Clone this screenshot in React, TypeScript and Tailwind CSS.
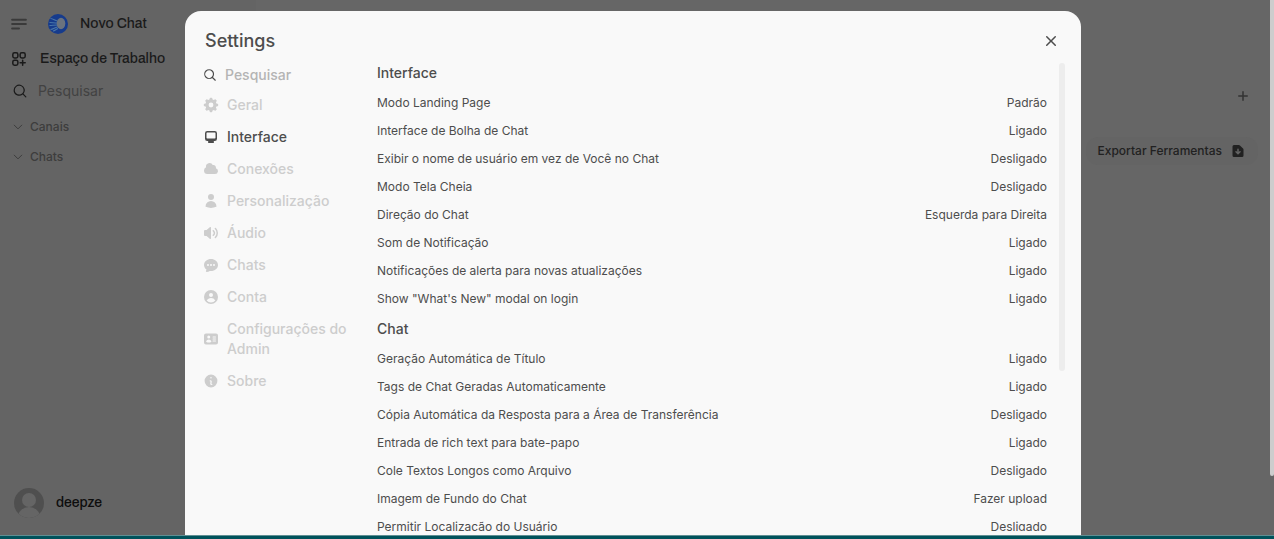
import React, { useState } from 'react';
import {
  HiIdentification,
  HiMiniCog8Tooth,
  HiMiniInformationCircle,
  HiUser,
} from 'react-icons/hi2';

type Setting = { label: string; value: string };
type Section = { title: string; settings: Setting[] };

const sections: Section[] = [
  {
    title: 'Interface',
    settings: [
      { label: 'Modo Landing Page', value: 'Padrão' },
      { label: 'Interface de Bolha de Chat', value: 'Ligado' },
      { label: 'Exibir o nome de usuário em vez de Você no Chat', value: 'Desligado' },
      { label: 'Modo Tela Cheia', value: 'Desligado' },
      { label: 'Direção do Chat', value: 'Esquerda para Direita' },
      { label: 'Som de Notificação', value: 'Ligado' },
      { label: 'Notificações de alerta para novas atualizações', value: 'Ligado' },
      { label: 'Show "What\'s New" modal on login', value: 'Ligado' },
    ],
  },
  {
    title: 'Chat',
    settings: [
      { label: 'Geração Automática de Título', value: 'Ligado' },
      { label: 'Tags de Chat Geradas Automaticamente', value: 'Ligado' },
      { label: 'Cópia Automática da Resposta para a Área de Transferência', value: 'Desligado' },
      { label: 'Entrada de rich text para bate-papo', value: 'Ligado' },
      { label: 'Cole Textos Longos como Arquivo', value: 'Desligado' },
      { label: 'Imagem de Fundo do Chat', value: 'Fazer upload' },
      { label: 'Permitir Localização do Usuário', value: 'Desligado' },
    ],
  },
];

const tabs = [
  { id: 'general', label: 'Geral', icon: <HiMiniCog8Tooth className="size-4" /> },
  { id: 'interface', label: 'Interface', icon: <SolidIcon d="M2 4.25A2.25 2.25 0 0 1 4.25 2h7.5A2.25 2.25 0 0 1 14 4.25v5.5A2.25 2.25 0 0 1 11.75 12h-1.312c.1.128.21.248.328.36a.75.75 0 0 1 .234.545v.345a.75.75 0 0 1-.75.75h-4.5a.75.75 0 0 1-.75-.75v-.345a.75.75 0 0 1 .234-.545c.118-.111.228-.232.328-.36H4.25A2.25 2.25 0 0 1 2 9.75v-5.5Zm2.25-.75a.75.75 0 0 0-.75.75v4.5c0 .414.336.75.75.75h7.5a.75.75 0 0 0 .75-.75v-4.5a.75.75 0 0 0-.75-.75h-7.5Z" /> },
  { id: 'connections', label: 'Conexões', icon: <SolidIcon d="M1 9.5A3.5 3.5 0 0 0 4.5 13H12a3 3 0 0 0 .917-5.857 2.503 2.503 0 0 0-3.198-3.019 3.5 3.5 0 0 0-6.628 2.171A3.5 3.5 0 0 0 1 9.5Z" /> },
  { id: 'personalization', label: 'Personalização', icon: <HiUser className="size-4" /> },
  { id: 'audio', label: 'Áudio', icon: <SolidIcon d="M7.557 2.066A.75.75 0 0 1 8 2.75v10.5a.75.75 0 0 1-1.248.56L3.59 11H2a1 1 0 0 1-1-1V6a1 1 0 0 1 1-1h1.59l3.162-2.81a.75.75 0 0 1 .805-.124ZM12.95 3.05a.75.75 0 1 0-1.06 1.06 5.5 5.5 0 0 1 0 7.78.75.75 0 1 0 1.06 1.06 7 7 0 0 0 0-9.9ZM10.828 5.172a.75.75 0 1 0-1.06 1.06 2.5 2.5 0 0 1 0 3.536.75.75 0 1 0 1.06 1.06 4 4 0 0 0 0-5.656Z" /> },
  { id: 'chats', label: 'Chats', icon: <SolidIcon d="M8 2C4.262 2 1 4.57 1 8c0 1.86.98 3.486 2.455 4.566a3.472 3.472 0 0 1-.469 1.26.75.75 0 0 0 .713 1.14 6.961 6.961 0 0 0 3.06-1.06c.403.062.818.094 1.241.094 3.738 0 7-2.57 7-6s-3.262-6-7-6ZM5 9a1 1 0 1 0 0-2 1 1 0 0 0 0 2Zm7-1a1 1 0 1 1-2 0 1 1 0 0 1 2 0ZM8 9a1 1 0 1 0 0-2 1 1 0 0 0 0 2Z" /> },
  { id: 'account', label: 'Conta', icon: <SolidIcon d="M15 8A7 7 0 1 1 1 8a7 7 0 0 1 14 0Zm-5-2a2 2 0 1 1-4 0 2 2 0 0 1 4 0ZM8 9c-1.825 0-3.422.977-4.295 2.437A5.49 5.49 0 0 0 8 13.5a5.49 5.49 0 0 0 4.294-2.063A4.997 4.997 0 0 0 8 9Z" /> },
  { id: 'admin', label: 'Configurações do Admin', icon: <HiIdentification className="size-4" /> },
  { id: 'about', label: 'Sobre', icon: <HiMiniInformationCircle className="size-4" /> },
];

export default function App() {
  return (
    <div className="relative flex h-screen flex-col overflow-hidden bg-[#666666] font-['Inter','Liberation_Sans',sans-serif]">
      <div className="flex min-h-0 flex-1">
        <Sidebar />
        <Workspace />
      </div>
      <div className="h-1 shrink-0 border-t border-[#5f8f93] bg-[#00525b]" />

      {/* Modal */}
      <div className="absolute inset-x-0 top-[11px] bottom-1 flex justify-center pr-2">
        <SettingsModal />
      </div>

      {/* Page scrollbar */}
      <div className="absolute top-0 right-0 h-[476px] w-1 rounded-b-sm bg-[#cdcdcd]" />
    </div>
  );
}

function Sidebar() {
  return (
    <aside className="flex w-64 shrink-0 flex-col bg-[#646464] font-['Archivo','Liberation_Sans',sans-serif] text-sm text-[#1a1a1a]">
      <div className="flex h-11 items-center pt-1 pl-2">
        <button aria-label="Menu" className="mr-[18px] p-px text-[#3a3a3a]">
          <StrokeIcon className="size-5" width={2.4} d="M3.75 6.75h16.5M3.75 12h16.5m-16.5 5.25H12" />
        </button>
        <a href="#" className="flex items-center gap-3 font-medium">
          <Logo />
          Novo Chat
        </a>
      </div>
      <a href="#" className="flex h-[30px] items-center gap-3 pl-2.5 font-medium">
        <StrokeIcon className="size-[18px]" width={2} d="M13.5 16.875h3.375m0 0h3.375m-3.375 0V13.5m0 3.375v3.375M6 10.5h2.25a2.25 2.25 0 0 0 2.25-2.25V6a2.25 2.25 0 0 0-2.25-2.25H6A2.25 2.25 0 0 0 3.75 6v2.25A2.25 2.25 0 0 0 6 10.5Zm0 9.75h2.25A2.25 2.25 0 0 0 10.5 18v-2.25a2.25 2.25 0 0 0-2.25-2.25H6a2.25 2.25 0 0 0-2.25 2.25V18A2.25 2.25 0 0 0 6 20.25Zm9.75-9.75H18a2.25 2.25 0 0 0 2.25-2.25V6A2.25 2.25 0 0 0 18 3.75h-2.25A2.25 2.25 0 0 0 13.5 6v2.25a2.25 2.25 0 0 0 2.25 2.25Z" />
        Espaço de Trabalho
      </a>
      <label className="mb-1 flex h-[34px] items-center gap-2.5 pl-3">
        <SearchIcon />
        <input
          aria-label="Pesquisar"
          placeholder="Pesquisar"
          className="w-40 bg-transparent font-['Inter',sans-serif] outline-none placeholder:text-[#424242]"
        />
      </label>
      <nav className="flex flex-col font-['Inter',sans-serif] text-xs font-medium text-[#3d3d3d]">
        {['Canais', 'Chats'].map(name => (
          <button key={name} className="flex h-[30px] items-center gap-1.5 pl-3 text-left">
            <StrokeIcon className="size-3" width={2} d="m19.5 8.25-7.5 7.5-7.5-7.5" />
            {name}
          </button>
        ))}
      </nav>
      <button className="mt-auto mb-[17px] flex items-center gap-3 pl-3.5 text-left font-medium text-[#0d0d0d]">
        <svg viewBox="0 0 30 30" className="size-[30px]" aria-hidden="true">
          <clipPath id="avatar"><circle cx="15" cy="15" r="15" /></clipPath>
          <g clipPath="url(#avatar)">
            <rect width="30" height="30" fill="#4f4f4f" />
            <circle cx="15" cy="12" r="7" fill="#656565" />
            <ellipse cx="15" cy="29" rx="11" ry="10" fill="#656565" />
          </g>
        </svg>
        deepze
      </button>
    </aside>
  );
}

function Workspace() {
  return (
    <main className="flex flex-1 flex-col items-end pr-4">
      <button aria-label="Adicionar" className="mt-[88px] mr-[7px] text-[#333333]">
        <svg viewBox="0 0 16 16" fill="currentColor" className="size-4">
          <path d="M8.75 3.75a.75.75 0 0 0-1.5 0v3.5h-3.5a.75.75 0 0 0 0 1.5h3.5v3.5a.75.75 0 0 0 1.5 0v-3.5h3.5a.75.75 0 0 0 0-1.5h-3.5v-3.5Z" />
        </svg>
      </button>
      <button className="mt-[33px] flex h-7 items-center gap-2 rounded-xl bg-[#646464] px-3 text-xs font-medium text-[#212121]">
        Exportar Ferramentas
        <svg viewBox="0 0 16 16" fill="currentColor" className="size-4">
          <path fillRule="evenodd" d="M4 2a1.5 1.5 0 0 0-1.5 1.5v9A1.5 1.5 0 0 0 4 14h8a1.5 1.5 0 0 0 1.5-1.5V6.621a1.5 1.5 0 0 0-.44-1.06L9.94 2.439A1.5 1.5 0 0 0 8.878 2H4Zm4 3.5a.75.75 0 0 1 .75.75v2.69l.72-.72a.75.75 0 1 1 1.06 1.06l-2 2a.75.75 0 0 1-1.06 0l-2-2a.75.75 0 0 1 1.06-1.06l.72.72V6.25A.75.75 0 0 1 8 5.5Z" />
        </svg>
      </button>
    </main>
  );
}

function SettingsModal() {
  const [tab, setTab] = useState('interface');

  return (
    <div role="dialog" aria-labelledby="settings-title" className="flex w-full max-w-4xl flex-col overflow-hidden rounded-t-2xl bg-[#f9f9f9] text-[#4d4d4d]">
      <div className="flex items-center justify-between px-5 pt-4 pb-1">
        <h1 id="settings-title" className="text-lg leading-7 font-medium">Settings</h1>
        <button aria-label="Fechar">
          <svg viewBox="0 0 20 20" fill="currentColor" className="size-5">
            <path d="M6.28 5.22a.75.75 0 0 0-1.06 1.06L8.94 10l-3.72 3.72a.75.75 0 1 0 1.06 1.06L10 11.06l3.72 3.72a.75.75 0 1 0 1.06-1.06L11.06 10l3.72-3.72a.75.75 0 0 0-1.06-1.06L10 8.94 6.28 5.22Z" />
          </svg>
        </button>
      </div>

      <div className="mb-1 flex min-h-0 flex-1 gap-4 px-4">
        <nav className="flex w-40 shrink-0 flex-col pt-1 text-sm font-medium">
          <label className="mb-0.5 flex h-6 items-center gap-2 pl-0.5">
            <StrokeIcon className="size-3.5" width={2} d="m21 21-5.197-5.197m0 0A7.5 7.5 0 1 0 5.196 5.196a7.5 7.5 0 0 0 10.607 10.607Z" />
            <input
              aria-label="Pesquisar"
              placeholder="Pesquisar"
              className="w-full min-w-0 bg-transparent outline-none placeholder:text-[#b4b4b4]"
            />
          </label>
          {tabs.map(t => (
            <button
              key={t.id}
              onClick={() => setTab(t.id)}
              className={`flex items-center gap-2 py-1.5 pl-0.5 text-left ${
                tab === t.id ? 'text-[#4d4d4d]' : 'text-[#cdcdcd]'
              }`}
            >
              <span className="shrink-0">{t.icon}</span>
              {t.label}
            </button>
          ))}
        </nav>

        {/* Settings list */}
        <div className="flex min-h-0 flex-1 gap-3 pt-1">
          <div className="flex min-w-0 flex-1 flex-col gap-1.5 overflow-hidden">
            {sections.map(section => (
              <section key={section.title} className="shrink-0">
                <h2 className="mb-1.5 text-sm font-medium">{section.title}</h2>
                {section.settings.map(s => (
                  <div key={s.label} className="flex h-7 items-center justify-between text-xs">
                    <span>{s.label}</span>
                    <button>{s.value}</button>
                  </div>
                ))}
              </section>
            ))}
          </div>
          <div className="h-[308px] w-1.5 rounded-full bg-[#ededed]" />
        </div>
      </div>
    </div>
  );
}

function Logo() {
  return (
    <svg viewBox="0 0 20 20" className="size-5" aria-hidden="true">
      <circle cx="10" cy="10" r="10" fill="#163b8c" />
      <path d="M2.500 4.500c3 .2 4 2 7 2.500M1.500 8.500c3 0 4 .5 8 .5M1.500 11.500c3 0 4-.5 8-.5M2.500 15.500c3-.2 4-2 7-2.500M5 17c2 0 3-2 5-2.500" stroke="#4a76a8" strokeWidth="1.200" fill="none" />
      <ellipse cx="13" cy="9.500" rx="4.300" ry="5.800" fill="#6b737e" />
    </svg>
  );
}

function SearchIcon() {
  return (
    <svg viewBox="0 0 20 20" fill="currentColor" className="size-4">
      <path fillRule="evenodd" d="M9 3.500a5.500 5.500 0 1 0 0 11 5.500 5.500 0 0 0 0-11ZM2 9a7 7 0 1 1 12.452 4.391l3.328 3.329a.75.75 0 1 1-1.060 1.060l-3.329-3.328A7 7 0 0 1 2 9Z" />
    </svg>
  );
}

function SolidIcon({ d }: { d: string }) {
  return (
    <svg viewBox="0 0 16 16" fill="currentColor" className="size-4" aria-hidden="true">
      <path fillRule="evenodd" clipRule="evenodd" d={d} />
    </svg>
  );
}

function StrokeIcon({ d, width, className }: { d: string; width: number; className: string }) {
  return (
    <svg viewBox="0 0 24 24" fill="none" stroke="currentColor" strokeWidth={width} strokeLinecap="round" strokeLinejoin="round" className={`shrink-0 ${className}`} aria-hidden="true">
      <path d={d} />
    </svg>
  );
}
